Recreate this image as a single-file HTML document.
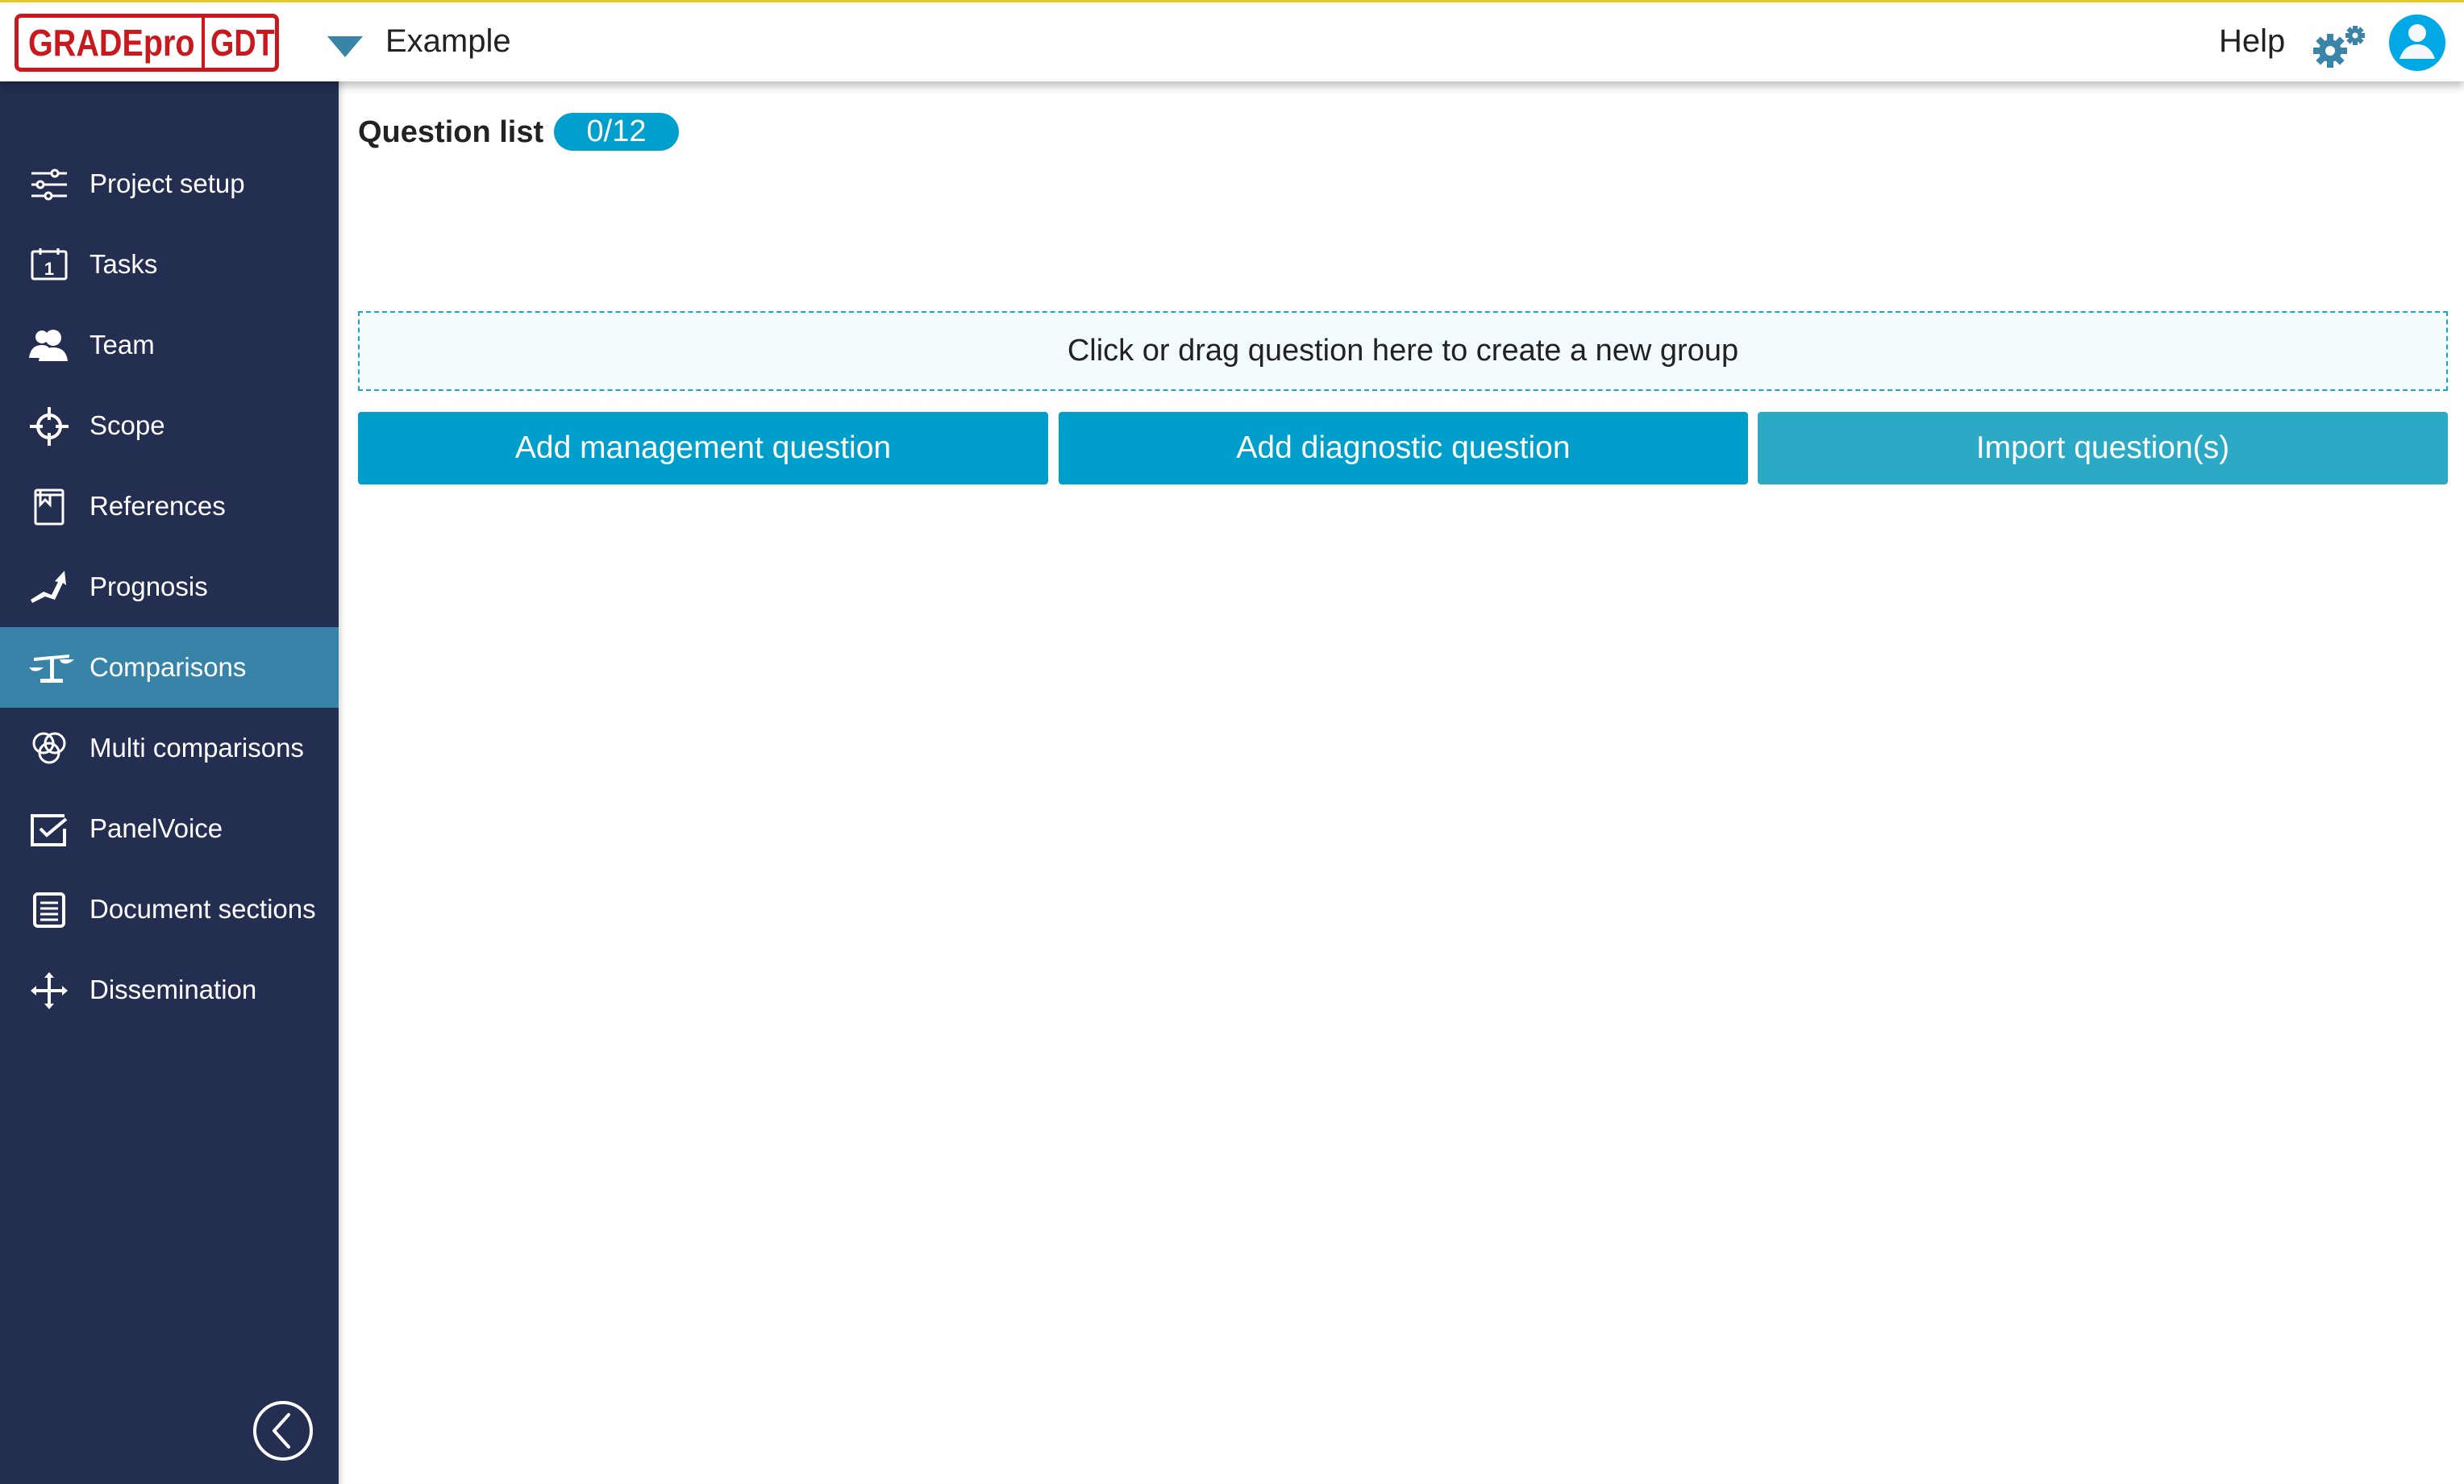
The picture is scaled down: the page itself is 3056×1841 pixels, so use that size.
<!DOCTYPE html>
<html><head><meta charset="utf-8"><style>
*{margin:0;padding:0;box-sizing:border-box}
body{width:3056px;height:1841px;overflow:hidden;background:#fff;font-family:"Liberation Sans",sans-serif;position:relative;color:#333}
.top{position:absolute;left:0;top:0;width:3056px;height:101px;background:#fff;border-top:3px solid #e8c92a;box-shadow:0 6px 10px rgba(0,0,0,.25);z-index:5}
.logo{position:absolute;left:18px;top:14px;width:328px;height:72px;border:5px solid #c8191e;border-radius:8px;color:#c8191e;font-weight:bold;font-size:46px;line-height:62px;overflow:hidden}
.logo .a{position:absolute;left:12px;top:0;transform:scaleX(0.86);transform-origin:0 50%;white-space:nowrap}
.logo .div{position:absolute;left:227px;top:0;width:4px;height:62px;background:#c8191e}
.logo .b{position:absolute;left:238px;top:0;transform:scaleX(0.82);transform-origin:0 50%;white-space:nowrap}
.tri{position:absolute;left:406px;top:42px;width:0;height:0;border-left:22px solid transparent;border-right:22px solid transparent;border-top:26px solid #3a84a8}
.ex{position:absolute;left:478px;top:26px;font-size:40px;color:#222}
.help{position:absolute;left:2752px;top:26px;font-size:40px;color:#222}
.side{position:absolute;left:0;top:101px;width:420px;height:1740px;background:#242e50}
.item{position:absolute;left:0;width:420px;height:100px;color:#fff;font-size:33px;line-height:100px}
.item span{position:absolute;left:111px}
.item svg{position:absolute;left:36px;top:26px}
.item.act{background:#3884a8}
.main{position:absolute;left:420px;top:101px;width:2636px;height:1740px;box-shadow:inset 8px 0 8px -6px rgba(0,0,0,.2)}
.ql{position:absolute;left:444px;top:140px;font-size:38px;font-weight:bold;color:#222;line-height:48px}
.badge{position:absolute;left:687px;top:140px;width:155px;height:47px;border-radius:24px;background:#009fcd;color:#fff;font-size:38px;text-align:center;line-height:47px}
.drop{position:absolute;left:444px;top:386px;width:2592px;height:99px;background:#f2fbfe;border:2px dashed #1ba4cc;text-align:center;line-height:95px;font-size:38px;color:#222}
.btn{position:absolute;top:511px;height:90px;border-radius:4px;background:#009fcb;color:#fff;text-align:center;line-height:90px;font-size:39px}
</style></head><body>
<div class="top">
 <div class="logo"><span class="a">GRADEpro</span><div class="div"></div><span class="b">GDT</span></div>
 <div class="tri"></div>
 <div class="ex">Example</div>
 <div class="help">Help</div>
 <svg style="position:absolute;left:2868px;top:26px" width="72" height="56" viewBox="0 0 72 56">
  <g fill="#3a84a8">
   <circle cx="22" cy="34" r="14"/>
   <g transform="translate(22 34)"><rect x="-4" y="-21" width="8" height="42"/><rect x="-4" y="-21" width="8" height="42" transform="rotate(45)"/><rect x="-4" y="-21" width="8" height="42" transform="rotate(90)"/><rect x="-4" y="-21" width="8" height="42" transform="rotate(135)"/></g>
   <circle cx="53" cy="15" r="8"/>
   <g transform="translate(53 15)"><rect x="-3" y="-12" width="6" height="24"/><rect x="-3" y="-12" width="6" height="24" transform="rotate(45)"/><rect x="-3" y="-12" width="6" height="24" transform="rotate(90)"/><rect x="-3" y="-12" width="6" height="24" transform="rotate(135)"/></g>
  </g>
  <circle cx="22" cy="34" r="6" fill="#fff"/><circle cx="53" cy="15" r="3.5" fill="#fff"/>
 </svg>
 <svg style="position:absolute;left:2962px;top:14px" width="72" height="72" viewBox="0 0 72 72">
  <circle cx="36" cy="36" r="35" fill="#00a9e5"/>
  <circle cx="36" cy="24" r="11" fill="#f5f8ff"/>
  <path d="M14 56 Q20 38 36 38 Q52 38 58 56 Z" fill="#f5f8ff"/>
 </svg>
</div>
<div class="side">
 <div class="item" style="top:77px"><svg width="50" height="50" viewBox="0 0 50 50" fill="none" stroke="#fff" stroke-width="3"><path d="M3 11H47M3 25H47M3 39H47"/><circle cx="32" cy="11" r="4" fill="#242e50"/><circle cx="14" cy="25" r="4" fill="#242e50"/><circle cx="24" cy="39" r="4" fill="#242e50"/></svg><span>Project setup</span></div>
 <div class="item" style="top:177px"><svg width="50" height="50" viewBox="0 0 50 50" fill="none" stroke="#fff" stroke-width="3"><rect x="4" y="8" width="42" height="34" rx="2"/><path d="M14 4V12M36 4V12"/><text x="25" y="37" fill="#fff" stroke="none" font-size="22" font-weight="bold" text-anchor="middle" font-family="Liberation Sans">1</text></svg><span>Tasks</span></div>
 <div class="item" style="top:277px"><svg width="50" height="50" viewBox="0 0 50 50" fill="#fff"><circle cx="16" cy="14" r="8"/><path d="M0 40Q2 24 16 24Q24 24 26 30L22 40Z"/><circle cx="30" cy="15" r="10"/><path d="M12 44Q14 27 30 27Q46 27 48 44Z"/></svg><span>Team</span></div>
 <div class="item" style="top:377px"><svg width="50" height="50" viewBox="0 0 50 50" fill="none" stroke="#fff" stroke-width="4"><circle cx="25" cy="25" r="14"/><path d="M1 25H17M33 25H49M25 1V17M25 33V49"/></svg><span>Scope</span></div>
 <div class="item" style="top:477px"><svg width="50" height="50" viewBox="0 0 50 50" fill="none" stroke="#fff" stroke-width="3"><rect x="8" y="4" width="34" height="42" rx="2"/><path d="M14 4V22L20 16L26 22V10M8 10H42"/></svg><span>References</span></div>
 <div class="item" style="top:577px"><svg width="50" height="50" viewBox="0 0 50 50" fill="#fff"><path d="M2 40L18 30L28 34L36 18L32 17L44 4L46 22L42 19L32 40L20 36L4 44Z"/></svg><span>Prognosis</span></div>
 <div class="item act" style="top:677px"><svg width="56" height="50" viewBox="0 0 56 50" fill="#fff"><path d="M6 12L50 8V12L6 16Z"/><rect x="26" y="10" width="5" height="30"/><rect x="14" y="38" width="28" height="5"/><path d="M0 24H18Q12 30 4 28Z"/><path d="M38 14H56Q48 22 40 18Z"/></svg><span>Comparisons</span></div>
 <div class="item" style="top:777px"><svg width="50" height="50" viewBox="0 0 50 50" fill="none" stroke="#fff" stroke-width="3"><circle cx="18" cy="18" r="12"/><circle cx="32" cy="18" r="12"/><circle cx="25" cy="30" r="12"/></svg><span>Multi comparisons</span></div>
 <div class="item" style="top:877px"><svg width="50" height="50" viewBox="0 0 50 50" fill="none" stroke="#fff" stroke-width="4"><path d="M44 8H4V44H44V24"/><path d="M14 24L22 32L46 12"/></svg><span>PanelVoice</span></div>
 <div class="item" style="top:977px"><svg width="50" height="50" viewBox="0 0 50 50" fill="none" stroke="#fff" stroke-width="4"><rect x="7" y="5" width="36" height="40" rx="4"/><path d="M14 16H36M14 23H36M14 30H36M14 37H36" stroke-width="3"/></svg><span>Document sections</span></div>
 <div class="item" style="top:1077px"><svg width="50" height="50" viewBox="0 0 50 50" fill="#fff"><path d="M25 2L31 9H19Z M25 48L31 41H19Z M2 25L9 19V31Z M48 25L41 19V31Z"/><rect x="9" y="23" width="32" height="4"/><rect x="23" y="9" width="4" height="32"/></svg><span>Dissemination</span></div>
 <svg style="position:absolute;left:313px;top:1636px" width="76" height="76" viewBox="0 0 76 76" fill="none" stroke="#fff" stroke-width="4"><circle cx="38" cy="38" r="35"/><path d="M45 18L27 38L45 58" stroke-linecap="round" stroke-linejoin="round"/></svg>
</div>
<div class="main"></div>
<div class="ql">Question list</div>
<div class="badge">0/12</div>
<div class="drop">Click or drag question here to create a new group</div>
<div class="btn" style="left:444px;width:856px">Add management question</div>
<div class="btn" style="left:1313px;width:855px">Add diagnostic question</div>
<div class="btn" style="left:2180px;width:856px;background:#2ca9c4">Import question(s)</div>
</body></html>
